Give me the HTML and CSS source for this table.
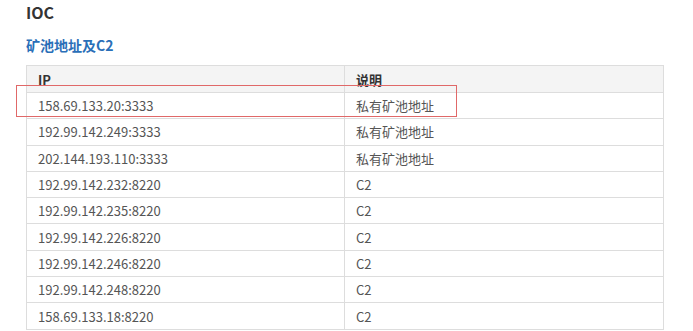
FILE: index.html
```html
<!DOCTYPE html>
<html lang="zh-CN">
<head>
<meta charset="utf-8">
<link rel="stylesheet" href="styles.css">
</head>
<body>
<div class="page">
  <h2 class="title">IOC</h2>
  <h3 class="subtitle">矿池地址及C2</h3>
  <div class="table-wrap">
    <table class="ioc-table">
      <thead>
        <tr><th class="col-ip">IP</th><th>说明</th></tr>
      </thead>
      <tbody>
        <tr><td>158.69.133.20:3333</td><td>私有矿池地址</td></tr>
        <tr><td>192.99.142.249:3333</td><td>私有矿池地址</td></tr>
        <tr><td>202.144.193.110:3333</td><td>私有矿池地址</td></tr>
        <tr><td>192.99.142.232:8220</td><td>C2</td></tr>
        <tr><td>192.99.142.235:8220</td><td>C2</td></tr>
        <tr><td>192.99.142.226:8220</td><td>C2</td></tr>
        <tr><td>192.99.142.246:8220</td><td>C2</td></tr>
        <tr><td>192.99.142.248:8220</td><td>C2</td></tr>
        <tr><td>158.69.133.18:8220</td><td>C2</td></tr>
      </tbody>
    </table>
    <div class="highlight"></div>
  </div>
</div>
</body>
</html>
```
FILE: styles.css
```css
html, body {
  margin: 0;
  padding: 0;
  background: #ffffff;
}
.page {
  padding: 0 29px 0 26px;
  font-family: "Noto Sans CJK SC", "Noto Sans", sans-serif;
  color: #555;
}
.title {
  margin: 0;
  font-size: 16px;
  line-height: 24px;
  font-weight: 700;
  color: #333;
}
.subtitle {
  margin: 10px 0 0 0;
  font-size: 14px;
  line-height: 22px;
  font-weight: 700;
  color: #2a6fb8;
}
.table-wrap {
  position: relative;
  margin-top: 9px;
}
.ioc-table {
  width: 638px;
  border-collapse: collapse;
  table-layout: fixed;
  font-size: 13px;
}
.ioc-table th,
.ioc-table td {
  border: 1px solid #dddddd;
  padding: 0 11px;
  text-align: left;
  vertical-align: middle;
  white-space: nowrap;
}
.ioc-table th {
  height: 26px;
  background: #f4f4f4;
  color: #333;
  font-weight: 700;
}
.ioc-table td {
  height: 25.3px;
  color: #555;
}
.col-ip {
  width: 295px;
}
.highlight {
  position: absolute;
  left: -10px;
  top: 20px;
  width: 439px;
  height: 30px;
  border: 1px solid #e06868;
  pointer-events: none;
}
```
